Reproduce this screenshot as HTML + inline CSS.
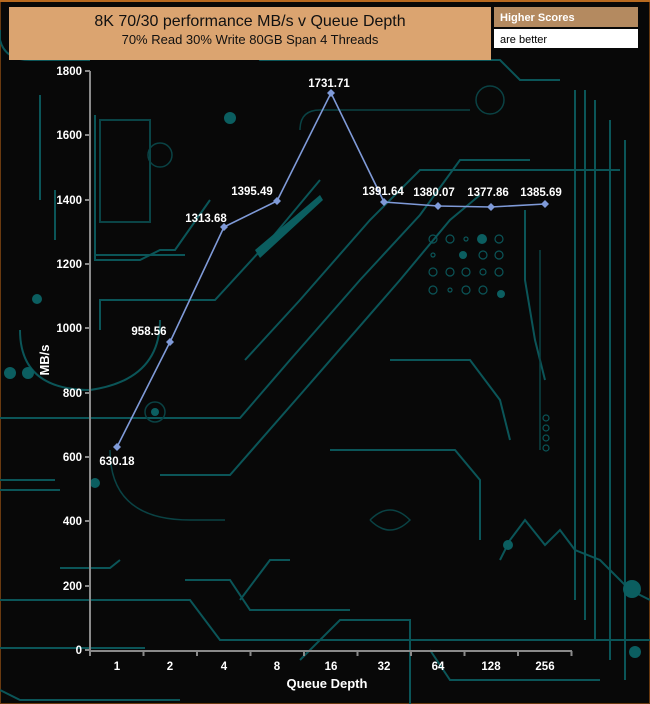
<!DOCTYPE html>
<html><head><meta charset="utf-8"><style>
html,body{margin:0;padding:0;background:#080808;}
body{width:650px;height:704px;overflow:hidden;position:relative;font-family:"Liberation Sans",Arial,sans-serif;}
svg{position:absolute;left:0;top:0;}
</style></head><body>
<svg width="650" height="704" viewBox="0 0 650 704" xmlns="http://www.w3.org/2000/svg">
<rect x="0" y="0" width="650" height="704" fill="#080808"/>
<rect x="0.5" y="0.5" width="649" height="703" fill="none" stroke="#6a3a10" stroke-width="1"/>
<rect x="0" y="0" width="650" height="2" fill="#b86a20"/>
<!-- circuit traces -->
<g fill="none" stroke="#0b5558" stroke-width="2">
<path d="M0 30 L0 40 Q5 60 30 60 L90 60"/>
<path d="M200 45 L250 45 L260 60 L500 60 L520 80 L560 80"/>
<path d="M40 95 L40 200 M55 190 L55 240"/>
<path d="M95 115 L95 260 L140 260 L160 250 L175 250 L210 200"/>
<path d="M95 255 L185 255"/>
<path d="M100 120 L150 120 L150 222 L100 222 Z" stroke="#0a4446"/>
<path d="M100 330 L100 300 L215 300 L270 240 L320 180"/>
<path d="M20 330 Q20 390 90 390 Q160 380 160 320"/>
<path d="M0 418 L240 418 L290 360 L360 280 L420 215 L460 160 L530 160"/>
<path d="M160 475 L230 475 L300 395 L400 280 L450 220 L480 195"/>
<path d="M245 360 L300 300 L370 220 L420 170 L620 170"/>
<path d="M0 480 L55 480 M0 490 L60 490"/>
<path d="M60 568 L110 568 L120 560"/>
<path d="M0 600 L190 600 L220 640 L650 640"/>
<path d="M0 648 L145 648"/>
<path d="M0 690 L20 700 L180 700"/>
<path d="M300 660 L340 620 L410 620 L410 704"/>
<path d="M330 450 L455 450 L480 480 L480 540"/>
<path d="M390 360 L470 360 L500 400 L510 440"/>
<path d="M525 210 L525 280 L535 340 L545 380"/>
<path d="M575 90 L575 600 M585 90 L585 620 M595 100 L595 640 M610 120 L610 660 M625 140 L625 680"/>
<path d="M500 560 L510 540 L525 520 L545 545 L560 530 L575 550 L600 560 L630 590 L650 600"/>
<path d="M240 600 L270 560 L290 560"/>
<path d="M185 580 L230 580 L250 610 L350 610"/>
<path d="M430 650 L450 680 L600 680"/>
</g>
<g fill="none" stroke="#0a4244" stroke-width="1.5">
<path d="M110 450 Q110 520 190 520 L225 520"/>
<path d="M300 130 Q300 110 320 110 L470 110"/>
<path d="M540 250 L540 450"/>
<circle cx="155" cy="412" r="10"/>
<circle cx="160" cy="155" r="12"/>
<circle cx="490" cy="100" r="14"/>
<path d="M370 520 Q390 500 410 520 Q390 540 370 520"/>
</g>
<g fill="#0b5e60">
<circle cx="37" cy="299" r="5"/><circle cx="230" cy="118" r="6"/><circle cx="95" cy="483" r="5"/>
<circle cx="632" cy="589" r="9"/><circle cx="635" cy="652" r="6"/><circle cx="508" cy="545" r="5"/>
<circle cx="482" cy="239" r="5"/><circle cx="463" cy="255" r="4"/><circle cx="501" cy="294" r="4"/>
<circle cx="10" cy="373" r="6"/><circle cx="28" cy="373" r="6"/>
<circle cx="155" cy="412" r="4"/>
<path d="M255 250 L320 195 L323 200 L260 258 Z"/>
</g>
<g fill="none" stroke="#0b5558" stroke-width="1.2">
<circle cx="433" cy="239" r="4"/><circle cx="450" cy="239" r="4"/><circle cx="466" cy="239" r="2"/><circle cx="499" cy="239" r="4"/>
<circle cx="433" cy="255" r="2"/><circle cx="483" cy="255" r="4"/><circle cx="499" cy="255" r="4"/>
<circle cx="433" cy="272" r="4"/><circle cx="450" cy="272" r="4"/><circle cx="466" cy="272" r="4"/><circle cx="483" cy="272" r="3"/><circle cx="499" cy="272" r="4"/>
<circle cx="433" cy="290" r="4"/><circle cx="450" cy="290" r="2"/><circle cx="466" cy="290" r="4"/><circle cx="483" cy="290" r="4"/>
<circle cx="546" cy="418" r="3"/><circle cx="546" cy="428" r="3"/><circle cx="546" cy="438" r="3"/><circle cx="546" cy="448" r="3"/>
</g>
<!-- title -->
<rect x="9" y="7" width="482" height="53" fill="#dba470"/>
<text x="250" y="26" font-size="16" text-anchor="middle" fill="#111">8K 70/30 performance MB/s v Queue Depth</text>
<text x="250" y="44" font-size="13" text-anchor="middle" fill="#111">70% Read 30% Write 80GB Span 4 Threads</text>
<rect x="494" y="7" width="144" height="20" fill="#b48a60"/>
<text x="500" y="21" font-size="11" font-weight="bold" fill="#fff">Higher Scores</text>
<rect x="494" y="29" width="144" height="19" fill="#fff"/>
<text x="500" y="43" font-size="11" fill="#000">are better</text>
<!-- axes -->
<g stroke="#8a8a8a" stroke-width="2" fill="none">
<path d="M90 71 L90 651 L572 651"/>
<path d="M85 71 H90 M85 135 H90 M85 200 H90 M85 264 H90 M85 328 H90 M85 393 H90 M85 457 H90 M85 521 H90 M85 586 H90 M85 650 H90"/>
<path d="M143.5 651 v5 M197 651 v5 M250.5 651 v5 M304 651 v5 M357.5 651 v5 M411 651 v5 M464.5 651 v5 M518 651 v5 M571.5 651 v5 M90 651 v5"/>
</g>
<g font-size="11.5" font-weight="bold" fill="#fff" text-anchor="end">
<text x="82" y="75">1800</text><text x="82" y="139">1600</text><text x="82" y="204">1400</text><text x="82" y="268">1200</text>
<text x="82" y="332">1000</text><text x="82" y="397">800</text><text x="82" y="461">600</text><text x="82" y="525">400</text>
<text x="82" y="590">200</text><text x="82" y="654">0</text>
</g>
<g font-size="11.5" font-weight="bold" fill="#fff" text-anchor="middle">
<text x="117" y="670">1</text><text x="170" y="670">2</text><text x="224" y="670">4</text><text x="277" y="670">8</text>
<text x="331" y="670">16</text><text x="384" y="670">32</text><text x="438" y="670">64</text><text x="491" y="670">128</text><text x="545" y="670">256</text>
</g>
<text x="327" y="688" font-size="13" font-weight="bold" fill="#fff" text-anchor="middle">Queue Depth</text>
<text transform="translate(49,360) rotate(-90)" font-size="13" font-weight="bold" fill="#fff" text-anchor="middle">MB/s</text>
<!-- data -->
<polyline points="117,447 170,342 224,227 277,201 331,93 384,202 438,206 491,207 545,204" fill="none" stroke="#7f9ad8" stroke-width="1.6"/>
<g fill="#7f9ad8">
<path d="M117 443 l4 4 l-4 4 l-4 -4z"/><path d="M170 338 l4 4 l-4 4 l-4 -4z"/><path d="M224 223 l4 4 l-4 4 l-4 -4z"/>
<path d="M277 197 l4 4 l-4 4 l-4 -4z"/><path d="M331 89 l4 4 l-4 4 l-4 -4z"/><path d="M384 198 l4 4 l-4 4 l-4 -4z"/>
<path d="M438 202 l4 4 l-4 4 l-4 -4z"/><path d="M491 203 l4 4 l-4 4 l-4 -4z"/><path d="M545 200 l4 4 l-4 4 l-4 -4z"/>
</g>
<g font-size="11.5" font-weight="bold" fill="#fff" text-anchor="middle">
<text x="117" y="465">630.18</text><text x="149" y="335">958.56</text><text x="206" y="222">1313.68</text>
<text x="252" y="195">1395.49</text><text x="329" y="87">1731.71</text><text x="383" y="195">1391.64</text>
<text x="434" y="196">1380.07</text><text x="488" y="196">1377.86</text><text x="541" y="196">1385.69</text>
</g>
</svg>
</body></html>
